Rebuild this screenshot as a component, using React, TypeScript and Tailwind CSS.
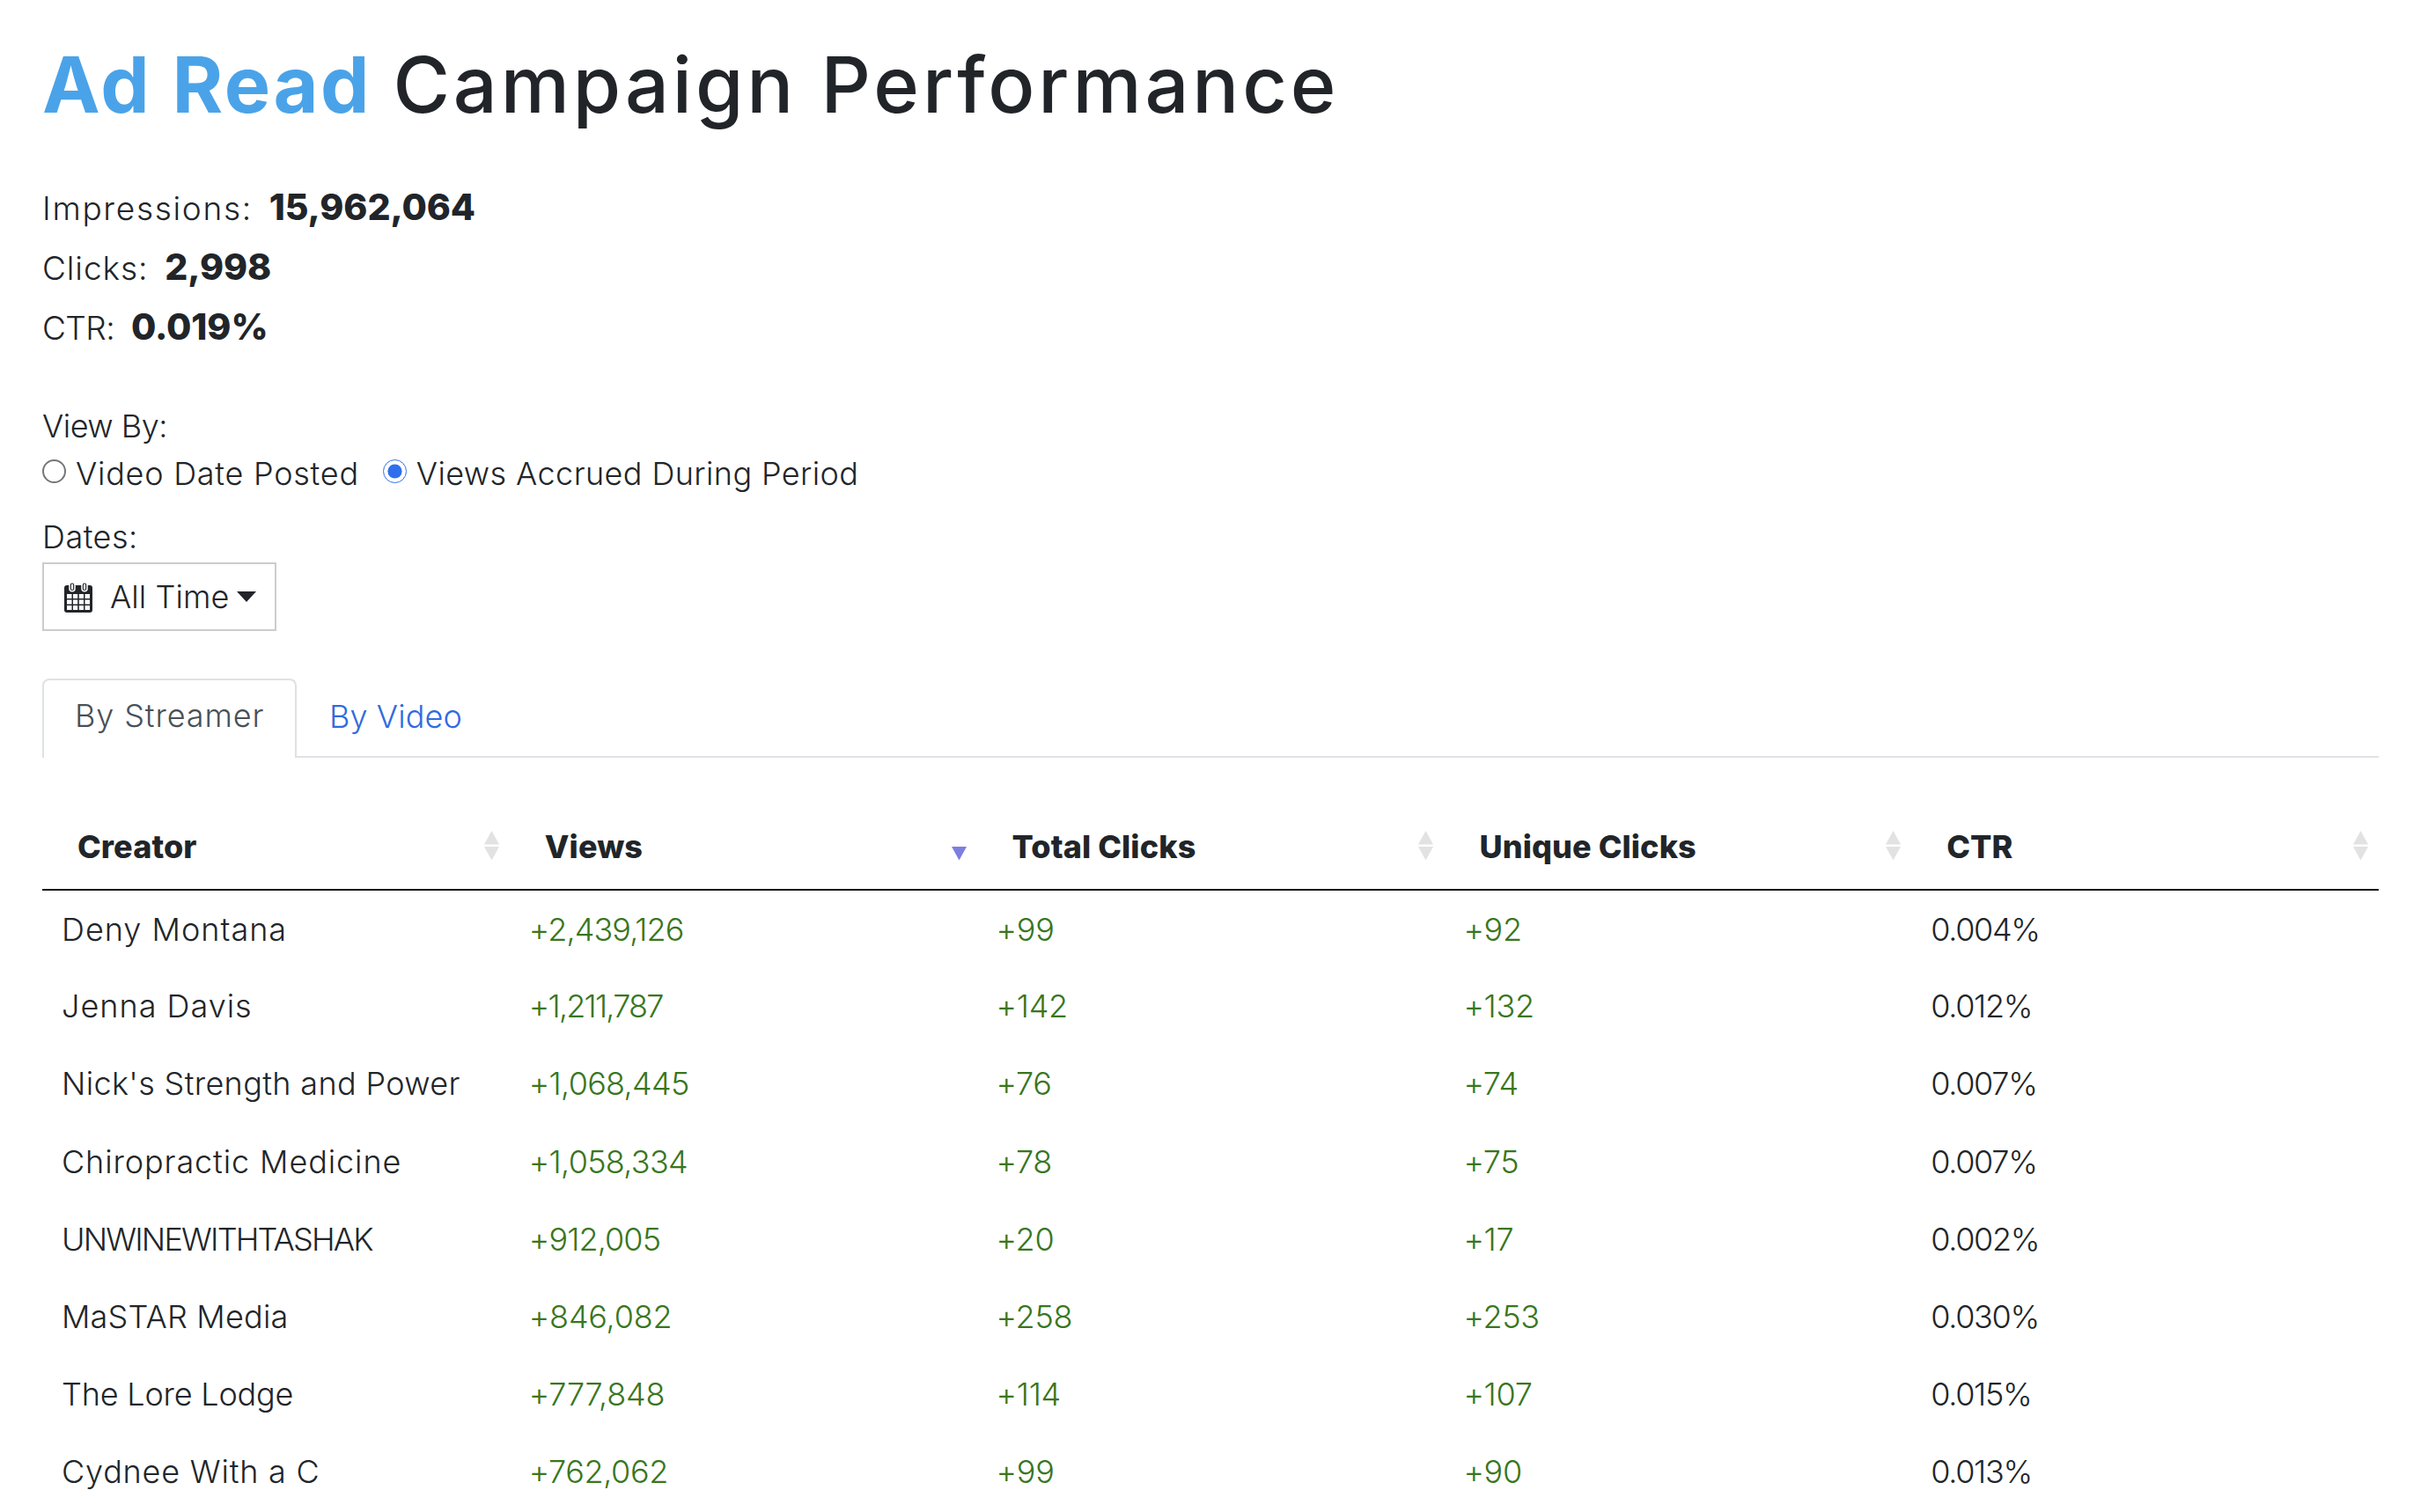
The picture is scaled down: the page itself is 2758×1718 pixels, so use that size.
const rows = [
  { name: "Deny Montana", fit: "tracking-[1px]", views: "+2,439,126", viewsFit: "tracking-[-0.9px]", cells: ["+99", "+92", "0.004%"] },
  { name: "Jenna Davis", fit: "tracking-[1px]", views: "+1,211,787", viewsFit: "tracking-[-1.8px]", cells: ["+142", "+132", "0.012%"] },
  { name: "Nick's Strength and Power", fit: "tracking-[0.35px]", views: "+1,068,445", viewsFit: "tracking-[-0.7px]", cells: ["+76", "+74", "0.007%"] },
  { name: "Chiropractic Medicine", fit: "tracking-[0.9px]", views: "+1,058,334", viewsFit: "tracking-[-0.7px]", cells: ["+78", "+75", "0.007%"] },
  { name: "UNWINEWITHTASHAK", fit: "tracking-[-1.8px]", views: "+912,005", viewsFit: "tracking-[-0.9px]", cells: ["+20", "+17", "0.002%"] },
  { name: "MaSTAR Media", fit: "tracking-[0.2px]", views: "+846,082", viewsFit: "tracking-[-0.2px]", cells: ["+258", "+253", "0.030%"] },
  { name: "The Lore Lodge", fit: "tracking-[-0.2px]", views: "+777,848", viewsFit: "tracking-[-0.2px]", cells: ["+114", "+107", "0.015%"] },
  { name: "Cydnee With a C", fit: "tracking-[0.8px]", views: "+762,062", viewsFit: "tracking-[-0.4px]", cells: ["+99", "+90", "0.013%"] },
];

const columns = ["Creator", "Views", "Total Clicks", "Unique Clicks", "CTR"];

const stats = [
  { label: "Impressions:", value: "15,962,064", fit: "tracking-[1.7px]" },
  { label: "Clicks:", value: "2,998", fit: "tracking-[0.9px]" },
  { label: "CTR:", value: "0.019%", fit: "tracking-[-0.6px]" },
];

function SortIcon({ active }: { active?: boolean }) {
  return (
    <svg width="19" height="34" viewBox="0 0 19 34" className="absolute right-[11px] top-[50%] mt-[-18px]">
      {!active && <path d="M9.5 0 L18 15.5 L1 15.5 Z" fill="#e2e2e2" />}
      <path d="M1 18 L18 18 L9.5 33.5 Z" fill={active ? "#7b7fe0" : "#e2e2e2"} />
    </svg>
  );
}

function CalendarIcon() {
  return (
    <svg width="32" height="35" viewBox="0 0 32 35" className="shrink-0">
      <path d="M3 4h26a3 3 0 0 1 3 3v25a3 3 0 0 1-3 3H3a3 3 0 0 1-3-3V7a3 3 0 0 1 3-3z" fill="#212529" />
      <rect x="6" y="0.8" width="6" height="10" rx="3" fill="#212529" stroke="#fff" strokeWidth="1.5" />
      <rect x="20" y="0.8" width="6" height="10" rx="3" fill="#212529" stroke="#fff" strokeWidth="1.5" />
      <rect x="7.9" y="2.6" width="2.2" height="6.4" rx="1.1" fill="#fff" />
      <rect x="21.9" y="2.6" width="2.2" height="6.4" rx="1.1" fill="#fff" />
      <path
        d="M3 14h5.5v5H3zM10 14h5.2v5H10zM16.8 14H22v5h-5.2zM23.5 14H29v5h-5.5zM3 20.5h5.5v5H3zM10 20.5h5.2v5H10zM16.8 20.5H22v5h-5.2zM23.5 20.5H29v5h-5.5zM3 27h5.5v5H3zM10 27h5.2v5H10zM16.8 27H22v5h-5.2zM23.5 27H29v5h-5.5z"
        fill="#fff"
      />
    </svg>
  );
}

export default function App() {
  return (
    <div className="h-[1718px] overflow-hidden bg-white pl-[48px] pr-[56px] pt-[48px] font-['Inter','Liberation_Sans',sans-serif] text-[#212529]">
      <h1 className="text-[88px] leading-[96px] tracking-[3.9px] font-medium">
        <span className="font-bold text-[#4aa3e8] tracking-[2.5px]">Ad Read</span>
        <span className="ml-[-3px]"> Campaign Performance</span>
      </h1>

      <div className="mt-[57px] flex flex-col text-[37px]">
        {stats.map((s) => (
          <div key={s.label} className="flex h-[68px] items-baseline gap-[19px] leading-[68px]">
            <span className={`font-light ${s.fit}`}>{s.label}</span>
            <b className="text-[41px] font-extrabold tracking-[-0.1px]">{s.value}</b>
          </div>
        ))}
      </div>

      <div className="mt-[52px] text-[36px] leading-[54px] font-light">
        <div className="tracking-[-0.5px]">View By:</div>
        <div className="flex items-center">
          <input
            type="radio"
            name="view"
            readOnly
            className="m-0 h-[27px] w-[27px] -translate-y-[3px] appearance-none rounded-full border-[2.5px] border-[#767676] bg-white"
          />
          <span className="ml-[11px] tracking-[0.75px]">Video Date Posted</span>
          <input
            type="radio"
            name="view"
            readOnly
            defaultChecked
            className="m-0 ml-[27px] h-[27px] w-[27px] -translate-y-[3px] accent-[#2f6fed]"
          />
          <span className="ml-[11px] tracking-[0.4px]">Views Accrued During Period</span>
        </div>
        <div className="mt-[18px] tracking-[0.5px]">Dates:</div>
        <button className="mt-[2px] flex h-[78px] w-[266px] items-center border-2 border-[#cccccc] pl-[23px]">
          <CalendarIcon />
          <span className="ml-[20px] tracking-[0.1px]">All Time</span>
          <svg width="22" height="12" viewBox="0 0 22 12" className="ml-[8px]">
            <path d="M0 0h22L11 12z" fill="#212529" />
          </svg>
        </button>
      </div>

      <div className="mt-[54px] flex h-[90px] border-b-2 border-[#dee2e6] text-[36px] font-light">
        <div className="h-[90px] w-[289px] rounded-t-[8px] border-2 border-b-0 border-[#dee2e6] bg-white pl-[35px] leading-[80px] tracking-[0.9px] text-[#495057]">
          By Streamer
        </div>
        <div className="pl-[37px] leading-[86px] tracking-[0.1px] text-[#2f6be0]">By Video</div>
      </div>

      <table className="mt-[53px] w-full table-fixed border-collapse text-[36px]">
        <thead>
          <tr className="border-b-[2px] border-[#111111]">
            {columns.map((c, i) => (
              <th key={c} className="relative h-[97px] pl-[40px] text-left font-extrabold tracking-[0.1px]">
                {c}
                <SortIcon active={i === 1} />
              </th>
            ))}
          </tr>
        </thead>
        <tbody>
          {rows.map((r) => (
            <tr key={r.name} className="h-[88.2px] font-light">
              <td className={`pl-[22px] ${r.fit}`}>{r.name}</td>
              <td className={`pl-[22px] text-[#38761d] ${r.viewsFit}`}>{r.views}</td>
              {r.cells.map((v, i) => (
                <td key={i} className={i < 2 ? "pl-[22px] tracking-[-0.3px] text-[#38761d]" : "pl-[22px] tracking-[-1.3px]"}>
                  {v}
                </td>
              ))}
            </tr>
          ))}
        </tbody>
      </table>
    </div>
  );
}
